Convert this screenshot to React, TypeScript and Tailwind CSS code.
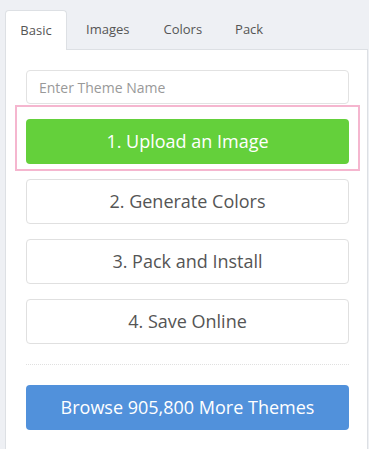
import React from "react";

export default function App() {
  const font = { fontFamily: '"Open Sans", "Noto Sans", sans-serif' };
  return (
    <div className="min-h-[449px] w-[369px] bg-[#eef0f4] pt-[10px]" style={font}>
      <div className="flex pl-[5px] text-[13px] text-[#555]">
        <div className="relative z-10 -mb-px flex h-[40px] w-[62px] items-center justify-center rounded-t-[4px] border border-b-0 border-[#dde0e4] bg-white pt-[1px]">
          Basic
        </div>
        <div className="flex h-[39px] items-center pl-[19px] pr-[15px] pt-[1px]">Images</div>
        <div className="flex h-[39px] items-center pl-[19px] pr-[17px] pt-[1px]">Colors</div>
        <div className="flex h-[39px] items-center px-[16px] pt-[1px]">Pack</div>
      </div>
      <div className="ml-[5px] mr-[1px] min-h-[400px] border border-b-0 border-[#dde0e4] bg-white pl-[20px] pr-[18px] pt-[20px]">
        <div className="flex h-[34px] items-center rounded-[4px] border border-[#e2e2e2] px-[12px] text-[14px] text-[#999]">
          Enter Theme Name
        </div>
        <div className="-mx-[11px] mt-[1px] border-2 border-[#f5b6cf] px-[9px] pb-[5px] pt-[12px]">
          <div className="flex h-[45px] items-center justify-center rounded-[4px] bg-[#64d03b] text-[18px] text-white">
            1. Upload an Image
          </div>
        </div>
        <div className="mt-[8px] flex flex-col gap-[15px]">
          {["2. Generate Colors", "3. Pack and Install", "4. Save Online"].map((t) => (
            <div
              key={t}
              className="flex h-[45px] items-center justify-center rounded-[4px] border border-[#e0e0e0] bg-white text-[18px] text-[#555]"
            >
              {t}
            </div>
          ))}
        </div>
        <div className="mt-[20px] border-t border-dotted border-[#e0e0e0]" />
        <div className="mt-[20px] flex h-[45px] items-center justify-center rounded-[4px] bg-[#5191db] text-[18px] text-white">
          Browse 905,800 More Themes
        </div>
      </div>
    </div>
  );
}
